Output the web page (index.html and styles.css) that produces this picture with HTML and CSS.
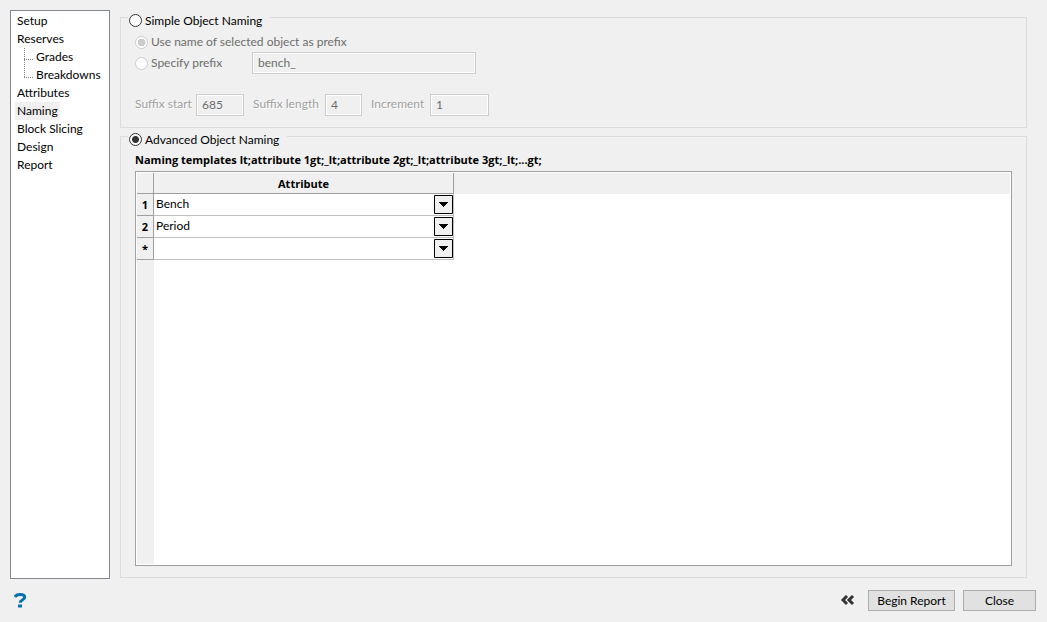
FILE: index.html
```html
<!DOCTYPE html>
<html lang="en">
<head>
<meta charset="utf-8">
<title>Object Naming</title>
<link rel="stylesheet" href="styles.css">
</head>
<body>
<div class="dialog">
  <div class="main">
    <nav class="sidebar">
      <ul class="tree">
        <li><a href="#setup">Setup</a></li>
        <li><a href="#reserves">Reserves</a>
          <ul class="branch">
            <li><a href="#grades">Grades</a></li>
            <li><a href="#breakdowns">Breakdowns</a></li>
          </ul>
        </li>
        <li><a href="#attributes">Attributes</a></li>
        <li><a class="selected" href="#naming">Naming</a></li>
        <li><a href="#slicing">Block Slicing</a></li>
        <li><a href="#design">Design</a></li>
        <li><a href="#report">Report</a></li>
      </ul>
    </nav>
    <form class="panels">
      <fieldset class="group">
        <legend><label class="option"><input type="radio" name="mode">Simple Object Naming</label></legend>
        <div class="row row-first">
          <label class="option dim"><input type="radio" name="prefix" checked disabled>Use name of selected object as prefix</label>
        </div>
        <div class="row">
          <label class="option dim prefix-option"><input type="radio" name="prefix" disabled>Specify prefix</label>
          <input class="field field-prefix" type="text" value="bench_" aria-label="Prefix" disabled>
        </div>
        <div class="row row-suffix">
          <label class="etched label-start" for="start">Suffix start</label>
          <input class="field field-start" id="start" type="text" value="685" disabled>
          <label class="etched label-length" for="length">Suffix length</label>
          <input class="field field-length" id="length" type="text" value="4" disabled>
          <label class="etched label-increment" for="increment">Increment</label>
          <input class="field field-increment" id="increment" type="text" value="1" disabled>
        </div>
      </fieldset>
      <fieldset class="group group-advanced">
        <legend><label class="option"><input type="radio" name="mode" checked>Advanced Object Naming</label></legend>
        <p class="template">Naming templates lt;attribute 1gt;_lt;attribute 2gt;_lt;attribute 3gt;_lt;...gt;</p>
        <div class="grid">
          <table class="sheet">
            <thead>
              <tr><th class="index"></th><th scope="col">Attribute</th></tr>
            </thead>
            <tbody>
              <tr>
                <th class="index" scope="row">1</th>
                <td><div class="cell"><select aria-label="Attribute 1"><option>Bench</option></select><svg class="drop" viewBox="0 0 19 19"><path d="M.5.5h18v18H.5z" fill="#f0f0f0" stroke="#000"/><path d="M5 7h9v1h-1v1h-1v1h-1v1h-1v1H9v-1H8v-1H7V9H6V8H5z"/></svg></div></td>
              </tr>
              <tr>
                <th class="index" scope="row">2</th>
                <td><div class="cell"><select aria-label="Attribute 2"><option>Period</option></select><svg class="drop" viewBox="0 0 19 19"><path d="M.5.5h18v18H.5z" fill="#f0f0f0" stroke="#000"/><path d="M5 7h9v1h-1v1h-1v1h-1v1h-1v1H9v-1H8v-1H7V9H6V8H5z"/></svg></div></td>
              </tr>
              <tr>
                <th class="index" scope="row">*</th>
                <td><div class="cell"><select aria-label="New attribute"><option></option></select><svg class="drop" viewBox="0 0 19 19"><path d="M.5.5h18v18H.5z" fill="#f0f0f0" stroke="#000"/><path d="M5 7h9v1h-1v1h-1v1h-1v1h-1v1H9v-1H8v-1H7V9H6V8H5z"/></svg></div></td>
              </tr>
            </tbody>
          </table>
        </div>
      </fieldset>
    </form>
  </div>
  <footer class="footer">
    <button class="icon-button" type="button" aria-label="Help">
      <svg width="13" height="15" viewBox="0 0 13 15"><path d="M.8 3.800C2 2.200 3.800 1.600 6 1.600c3 0 4.700 1 4.700 2.700 0 2.800-4.500 2.600-4.500 5.400" fill="none" stroke="#0073ae" stroke-width="3"/><path d="M4 11.500h4v3H4z" fill="#0073ae"/></svg>
    </button>
    <button class="icon-button collapse" type="button" aria-label="Collapse">
      <svg width="14" height="12" viewBox="0 0 14 12"><path d="M6 1 2 5l4 4M12 1 8 5l4 4" fill="none" stroke="#333" stroke-width="3"/></svg>
    </button>
    <button class="button button-report" type="button">Begin Report</button>
    <button class="button button-close" type="button">Close</button>
  </footer>
</div>
</body>
</html>
```
FILE: styles.css
```css
* { box-sizing: border-box; }

body {
  margin: 0;
  background: #f0f0f0;
  color: #000;
  font: 12px/18px "Segoe UI", Lato, "Open Sans", sans-serif;
}

input, select, button { font: inherit; color: inherit; }

.dialog {
  display: flex;
  flex-direction: column;
  min-height: 100vh;
  padding: 9px 11px 11px 10px;
}

.main { display: flex; flex: 1; gap: 10px; }

/* Navigation tree */
.sidebar {
  flex: 0 0 100px;
  min-width: 0;
  margin-top: 1px;
  padding: 1px 4px;
  background: #fff;
  border: 1px solid #828790;
}

.tree, .branch { margin: 0; padding: 0; list-style: none; }

.tree a {
  display: inline-block;
  padding: 0 2px;
  color: #000;
  text-decoration: none;
  white-space: nowrap;
  vertical-align: top;
}

.tree .selected { background: #f0f0f0; }

.branch { padding-left: 9px; }

.branch li {
  position: relative;
  height: 18px;
  padding-left: 10px;
}

.branch li::before {
  content: "";
  position: absolute;
  top: 0;
  left: 0;
  width: 9px;
  height: 11px;
  border-bottom: 1px dotted #808080;
}

.branch li::after {
  content: "";
  position: absolute;
  top: -8px;
  left: 0;
  height: 19px;
  border-left: 1px dotted #808080;
}

.branch li:first-child::after { top: 0; height: 11px; }

/* Group boxes */
.panels {
  display: flex;
  flex: 1;
  flex-direction: column;
  min-width: 0;
  margin-right: 9px;
}

.group {
  min-width: 0;
  margin: 0;
  padding: 0 14px 11px;
  border: 1px solid #dcdcdc;
}

.group legend {
  height: 17px;
  margin-left: -7px;
  padding: 6px 8px 0 1px;
  line-height: 11px;
}

.group-advanced {
  display: flex;
  flex: 1;
  flex-direction: column;
  margin-bottom: 1px;
}

.option {
  display: flex;
  align-items: center;
  gap: 3px;
  white-space: nowrap;
}

legend .option { height: 11px; }

.option input {
  flex: none;
  width: 13px;
  height: 13px;
  margin: 0;
  appearance: none;
  background: #fff;
  border: 1px solid #333;
  border-radius: 50%;
}

.option input:checked {
  background: radial-gradient(circle, #333 0 3px, #fff 4px);
}

.dim { color: #6d6d6d; }
.option input:disabled { border-color: #ccc; }
.option input:disabled:checked {
  background: radial-gradient(circle, #ccc 0 4px, #fff 4px);
}

.row { display: flex; align-items: center; height: 22px; }
.row-first { height: 20px; margin-top: 6px; }
.row-suffix { margin-top: 20px; }
.prefix-option { width: 117px; }

.field {
  height: 22px;
  padding: 0 5px 2px;
  background: #f0f0f0;
  border: 1px solid #ccc;
  border-radius: 0;
  box-shadow: inset 0 0 0 1px #fff;
  color: #6d6d6d;
}

.field-prefix { width: 224px; }
.field-start { width: 48px; }
.field-length { width: 37px; }
.field-increment { width: 59px; }

.etched {
  padding-bottom: 2px;
  color: #a0a0a0;
  text-shadow: 1px 1px 0 #fff;
  white-space: nowrap;
}

.label-start { width: 61px; }
.label-length { width: 72px; margin-left: 9px; }
.label-increment { width: 59px; margin-left: 9px; }

/* Attribute grid */
.template,
.sheet th {
  font: bold 11px/18px "Segoe UI", "Open Sans", "Noto Sans", sans-serif;
}

.template { margin: 6px 0 2px; white-space: nowrap; }

.grid {
  flex: 1;
  padding: 1px;
  border: 1px solid #a0a0a0;
  background-color: #fff;
  background-image:
    linear-gradient(#f0f0f0, #f0f0f0),
    linear-gradient(#f0f0f0, #f0f0f0);
  background-origin: content-box;
  background-repeat: no-repeat;
  background-size: 100% 21px, 17px 100%;
}

.sheet {
  width: 317px;
  table-layout: fixed;
  border-spacing: 0;
}

.sheet th, .sheet td {
  height: 22px;
  padding: 0;
  border-right: 1px solid #a0a0a0;
  border-bottom: 1px solid #a0a0a0;
}

.sheet td { border-color: #c0c0c0; }
.sheet thead th { height: 21px; padding-top: 2px; }
.sheet .index { width: 17px; background: #f0f0f0; }

.cell { position: relative; height: 21px; }

.cell select {
  display: block;
  width: 100%;
  height: 20px;
  padding: 0 20px 0 2px;
  appearance: none;
  background: transparent;
  border: 0;
}

.drop {
  position: absolute;
  top: 1px;
  right: 0;
  width: 19px;
  height: 19px;
  pointer-events: none;
}

/* Bottom bar */
.footer {
  display: flex;
  align-items: center;
  gap: 8px;
  margin-top: 11px;
}

.icon-button {
  display: flex;
  padding: 0 4px;
  background: none;
  border: 0;
}

.collapse { margin-left: auto; margin-right: 1px; }

.button {
  height: 21px;
  padding: 0;
  background: #e1e1e1;
  border: 1px solid #adadad;
}

.button-report { width: 87px; }
.button-close { width: 73px; }
```
